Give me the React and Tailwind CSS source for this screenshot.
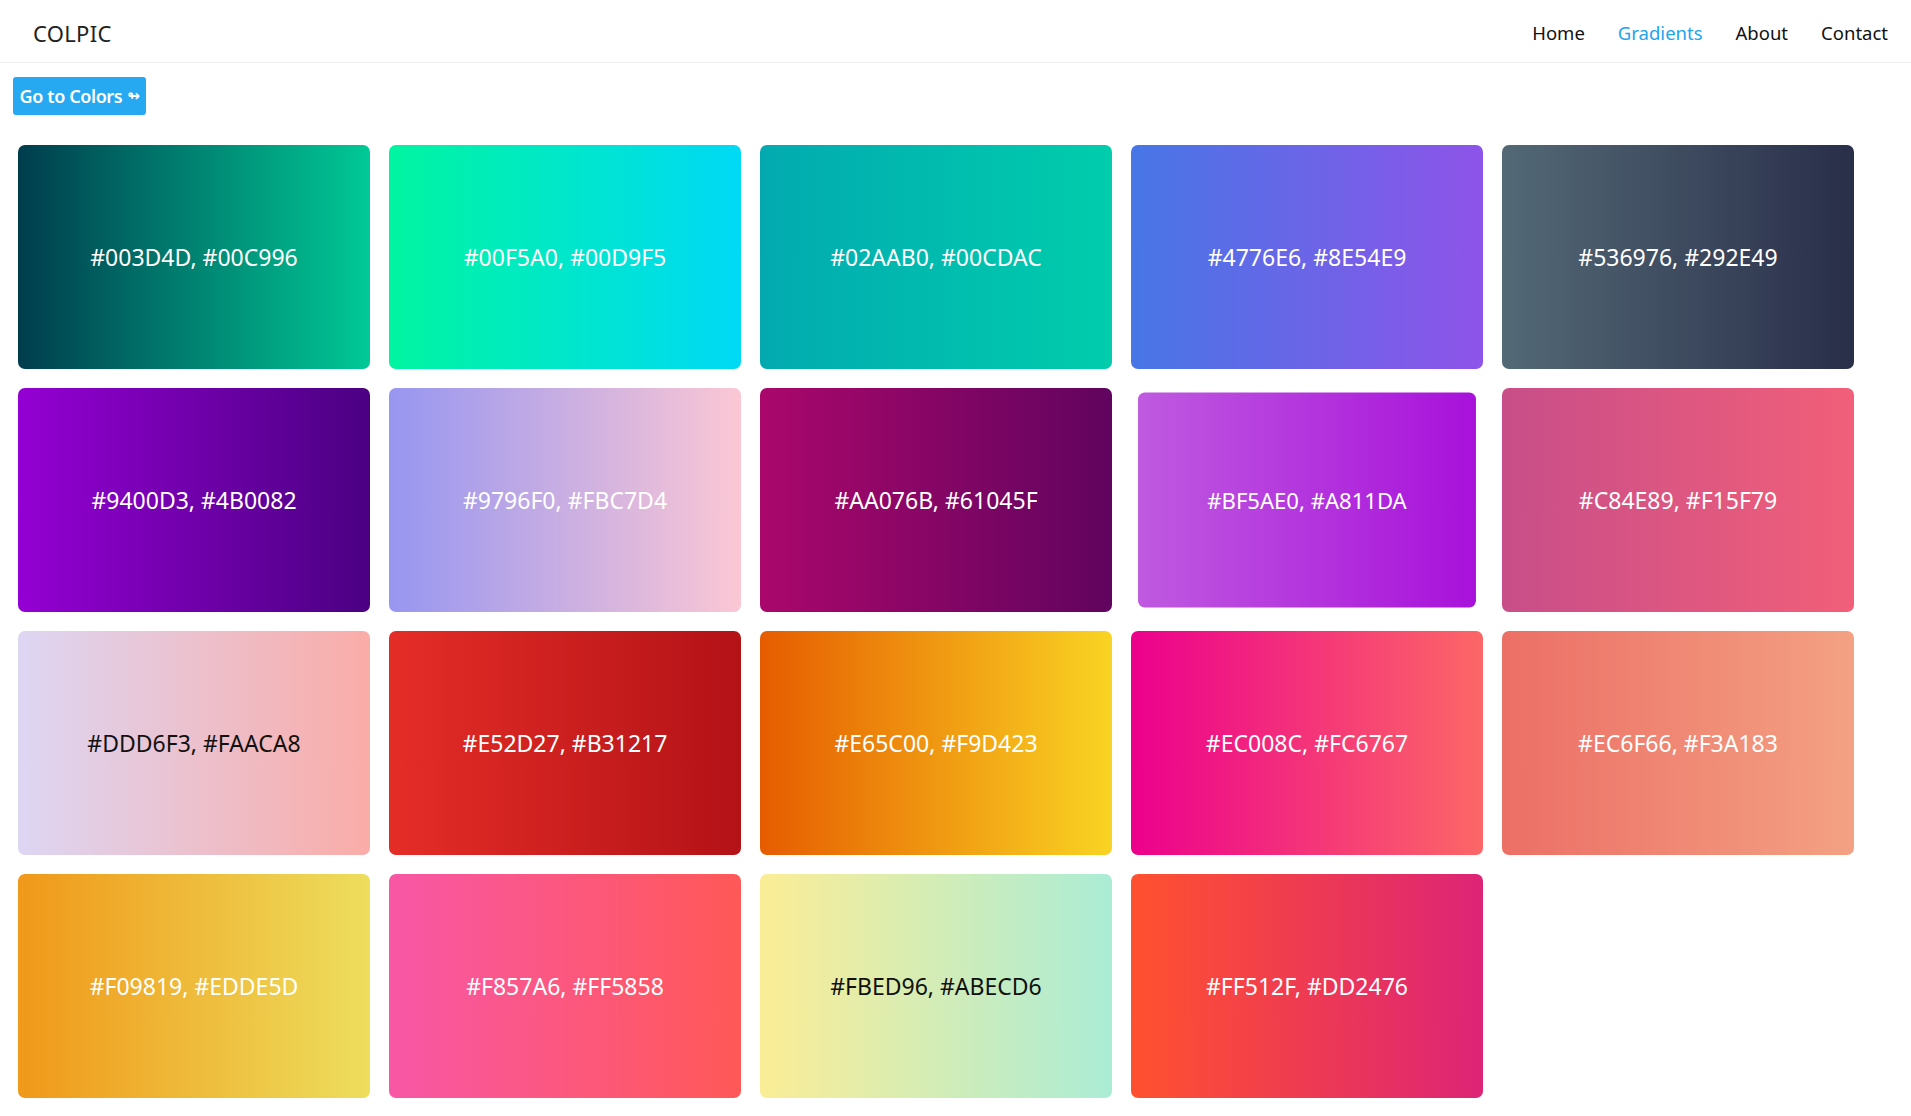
import React from 'react';

const gradients = [
    ['#003D4D', '#00C996'],
    ['#00F5A0', '#00D9F5'],
    ['#02AAB0', '#00CDAC'],
    ['#4776E6', '#8E54E9'],
    ['#536976', '#292E49'],
    ['#9400D3', '#4B0082'],
    ['#9796F0', '#FBC7D4'],
    ['#AA076B', '#61045F'],
    ['#BF5AE0', '#A811DA'],
    ['#C84E89', '#F15F79'],
    ['#DDD6F3', '#FAACA8'],
    ['#E52D27', '#B31217'],
    ['#E65C00', '#F9D423'],
    ['#EC008C', '#FC6767'],
    ['#EC6F66', '#F3A183'],
    ['#F09819', '#EDDE5D'],
    ['#F857A6', '#FF5858'],
    ['#FBED96', '#ABECD6'],
    ['#FF512F', '#DD2476'],
];

// light gradients get dark text
const darkText = ['#DDD6F3', '#FBED96'];

function GradientCard({ from, to, hovered }) {
    const dark = darkText.includes(from);
    return (
        <div
            className={`w-[352px] h-[224px] rounded-[7px] flex items-center justify-center cursor-pointer transition-transform ${hovered ? 'scale-[0.96]' : ''}`}
            style={{ backgroundImage: `linear-gradient(to right, ${from}, ${to})` }}
        >
            <span className={`text-[23px] ${dark ? 'text-[#111]' : 'text-white'}`}>
                {from}, {to}
            </span>
        </div>
    );
}

export default function App() {
    return (
        <div className="min-h-screen bg-white font-['Noto_Sans',sans-serif]">
            <header className="h-[63px] border-b border-[#efefef] flex items-center justify-between pl-[33px] pr-[23px] pt-[4px]">
                <span className="text-[22px] text-[#222] tracking-[0.3px]">COLPIC</span>
                <nav className="flex items-center gap-[33px] text-[18.5px] text-[#111]">
                    <a className="cursor-pointer">Home</a>
                    <a className="cursor-pointer text-[#22a4ee]">Gradients</a>
                    <a className="cursor-pointer">About</a>
                    <a className="cursor-pointer">Contact</a>
                </nav>
            </header>

            <div className="pl-[13px] pt-[14px]">
                <button className="h-[38px] w-[133px] bg-[#26a9f1] rounded-[3px] text-white text-[18px] font-semibold flex items-center justify-center gap-[5px] tracking-[-0.4px]">
                    Go to Colors <span className="text-[15px] font-['DejaVu_Sans',sans-serif]">↬</span>
                </button>
            </div>

            <main className="pl-[18px] pt-[30px] pb-[19px] flex flex-wrap gap-[19px] max-w-[1880px]">
                {gradients.map(([from, to], i) => (
                    <GradientCard key={from} from={from} to={to} hovered={i === 8} />
                ))}
            </main>
        </div>
    );
}
